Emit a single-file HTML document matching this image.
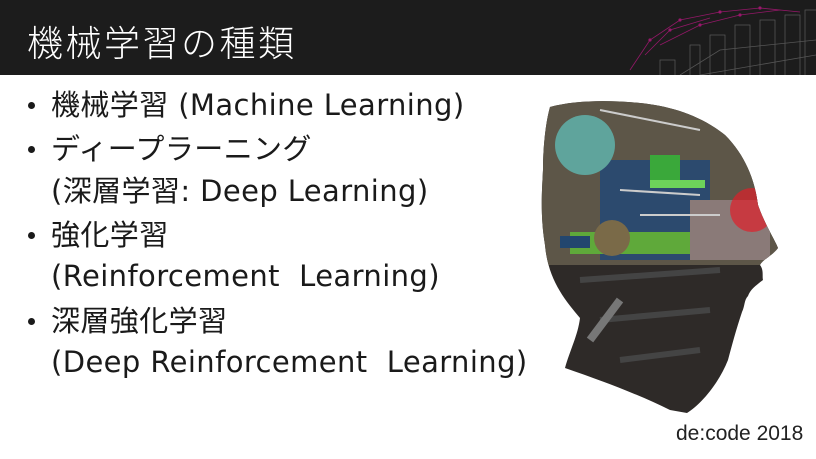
<!DOCTYPE html>
<html><head><meta charset="utf-8"><style>
html,body{margin:0;padding:0;width:816px;height:459px;overflow:hidden;background:#fff;}
.hdr{position:absolute;left:0;top:0;width:816px;height:75px;background:#1c1c1c;}
.title{position:absolute;left:27px;top:18px;color:#fff;font:36px "Liberation Sans","Noto Sans CJK JP",sans-serif;letter-spacing:2.5px;line-height:52px;font-weight:300;}
.list{position:absolute;left:0;top:84px;font:29px/42.5px "DejaVu Sans","Noto Sans CJK JP",sans-serif;color:#1a1a1a;letter-spacing:0.4px;}
.l{position:absolute;left:51px;white-space:nowrap;}
.b{position:absolute;left:28px;width:7px;height:7px;border-radius:50%;background:#1a1a1a;}
.foot{position:absolute;left:676px;top:422px;font:21px "Liberation Sans",sans-serif;color:#222;}
</style></head><body>
<div class="hdr"></div>
<svg style="position:absolute;left:600px;top:0" width="216" height="75">
<g stroke="#b0177a" stroke-width="0.8" fill="#c2188a" opacity="0.8">
<path d="M30 70 L50 40 L80 20 L120 12 L160 8 L200 12 M45 55 L70 30 L110 18 M60 45 L100 25 L140 15 L180 10" fill="none"/>
<circle cx="50" cy="40" r="1.2"/><circle cx="80" cy="20" r="1.2"/><circle cx="120" cy="12" r="1.2"/><circle cx="160" cy="8" r="1.2"/><circle cx="70" cy="30" r="1.2"/><circle cx="100" cy="25" r="1.2"/><circle cx="140" cy="15" r="1.2"/>
</g>
<g stroke="#555" stroke-width="0.8" fill="none">
<path d="M60 75 L60 60 L75 60 L75 75 M90 75 L90 45 L100 45 L100 75 M110 75 L110 35 L125 35 L125 75 M135 75 L135 25 L150 25 L150 75 M160 75 L160 20 L175 20 L175 75 M185 75 L185 15 L200 15 L200 75 M205 75 L205 10 L216 10"/>
<path d="M80 75 L120 50 L216 40 M100 75 L216 55"/>
</g>
</svg>
<div class="title">機械学習の種類</div>
<div class="list">
<div class="b" style="top:18px"></div><div class="l" style="top:0">機械学習 (Machine Learning)</div>
<div class="b" style="top:62px"></div><div class="l" style="top:44px">ディープラーニング</div>
<div class="l" style="top:86px">(深層学習: Deep Learning)</div>
<div class="b" style="top:148px"></div><div class="l" style="top:130px">強化学習</div>
<div class="l" style="top:171px">(Reinforcement&nbsp; Learning)</div>
<div class="b" style="top:234px"></div><div class="l" style="top:216px">深層強化学習</div>
<div class="l" style="top:257px">(Deep Reinforcement&nbsp; Learning)</div>
</div>
<svg style="position:absolute;left:0;top:0" width="816" height="459">
<defs>
<clipPath id="hc"><path id="hp" d="M550 107 C575 100 610 100 640 103 C670 106 700 115 725 135 C745 155 755 180 758 205 C765 225 775 240 778 248 C772 256 762 260 760 265 C764 270 762 276 763 280 C755 286 750 290 748 296 C744 300 745 306 742 312 C736 330 732 345 728 360 C718 385 700 405 687 413 L670 410 C640 395 600 380 565 368 C570 350 578 335 580 318 C565 300 548 280 545 245 C540 215 542 190 543 170 C543 150 545 125 550 107 Z"/></clipPath>
</defs>
<use href="#hp" fill="#2e2a28"/>
<g clip-path="url(#hc)">
<rect x="540" y="95" width="240" height="170" fill="#5d5648"/>
<rect x="600" y="160" width="110" height="100" fill="#2c4a6e"/>
<rect x="650" y="155" width="30" height="25" fill="#3aa83a"/>
<rect x="650" y="180" width="55" height="8" fill="#6dd35a"/>
<rect x="570" y="232" width="180" height="22" fill="#5fa93a"/>
<rect x="560" y="236" width="30" height="12" fill="#23466e"/>
<rect x="690" y="200" width="80" height="60" fill="#8a7a78"/>
<circle cx="585" cy="145" r="30" fill="#5fa49c"/>
<circle cx="612" cy="238" r="18" fill="#7a6a48"/>
<path d="M600 110 L650 120 L700 130 M620 190 L700 195 M640 215 L720 215" stroke="#ccc" stroke-width="2" fill="none"/>
<circle cx="752" cy="210" r="22" fill="#e0202a" opacity="0.7"/>
<path d="M580 280 L720 270 M600 320 L710 310 M620 360 L700 350" stroke="#444" stroke-width="6"/>
<path d="M590 340 L620 300" stroke="#777" stroke-width="8"/>
</g>
</svg>
<div class="foot">de:code 2018</div>
</body></html>
